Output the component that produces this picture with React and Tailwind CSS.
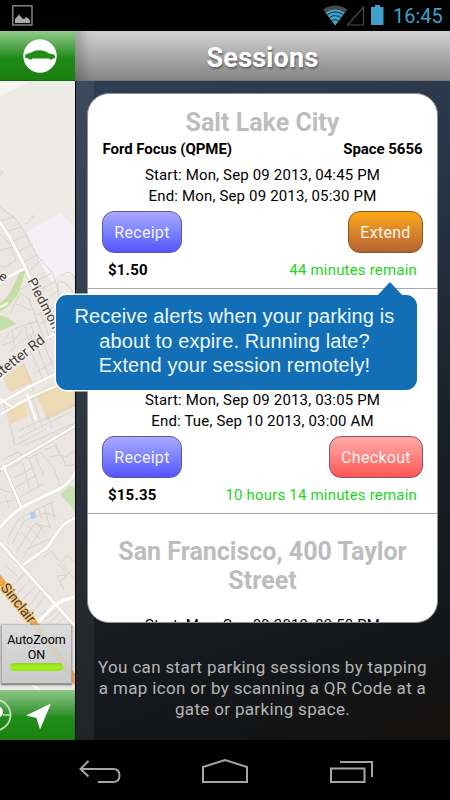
import React from "react";

function StatusBar() {
  return (
    <div className="flex h-[31px] shrink-0 items-start justify-between bg-black pl-3 pr-2">
      <svg className="mt-[5px]" width="21" height="21" viewBox="0 0 21 21">
        <rect x="0.8" y="0.8" width="19.2" height="19.2" fill="none" stroke="#8a8a8a" strokeWidth="1.4" />
        <path d="M3 18V14L7 9.5L10 13L12 14L14.5 12L18 15V18Z" fill="#a9a9a9" />
      </svg>
      <div className="flex h-full items-start">
        <svg width="64" height="31" viewBox="0 0 64 31">
          <path d="M0 9.5Q12 1.5 24.5 9.5L12.2 25.5Z" fill="#4a4a4a" />
          <path d="M2.6 12.7Q12 6.5 21.8 12.7L12.2 25.5Z" fill="#3fa0c8" />
          <g fill="none" stroke="#123344" strokeWidth="1">
            <path d="M4.2 14.6Q12.2 9.3 20.2 14.6" />
            <path d="M6.3 17.6Q12.2 13.6 18 17.6" />
            <path d="M8.6 20.8Q12.2 18.2 15.6 20.8" />
          </g>
          <path d="M24.5 25L40.5 7V25Z" fill="none" stroke="#4c4c4c" strokeWidth="1.2" />
          <path d="M48 7H52V5H57V7H60.5V25H48Z" fill="#3fa0c8" />
        </svg>
        <span className="ml-[6px] mt-[4px] w-[49px] whitespace-nowrap text-[20px] leading-6 text-[#3fa0c8]">16:45</span>
      </div>
    </div>
  );
}

function StreetMap() {
  return (
    <svg className="block" width="75" height="609" viewBox="0 81 75 609">
      <rect x="0" y="81" width="75" height="609" fill="#edebe5" />
      <path d="M0 81H32L0 96Z" fill="#f6f5f2" />
      <path d="M0 205L15 218L30 235L58 300L75 320V690H0Z" fill="#ebe6e1" />
      <path d="M27 232L60 213L75 228V275L60 274L52 282L40 262Z" fill="#f3f0f7" />
      <path d="M25 271L20 290Q12 305 0 312V303Q8 298 13 287L20 272Z" fill="#c5dfa3" />
      <path d="M0 315L8 318L16 324L0 331Z" fill="#c3dfa8" />
      <path d="M3 378L23 363L33 382L10 392Z" fill="#ecdab5" />
      <path d="M7 408L25 402L28 416L11 424Z" fill="#ecdab5" />
      <path d="M35 393L55 384L75 388V406L47 420Z" fill="#ecdab5" />
      <path d="M60 494L70 486L75 488V512L70 505Z" fill="#c9dfb4" />
      <path d="M30 513L35 511L36 518L31 519Z" fill="#a9cdf0" />
      <g fill="none" stroke="#cfcac4" strokeWidth="0.7">
        <path d="M0 207L15 218L22 228L38 257L53 273L59 295L75 320M2 221L15 216M7 231L22 227M12 242L27 235M17 252L33 244M22 263L37 255M29 220Q35 212 33 218Q30 223 24 224M0 176Q4 171 0 170" />
        <path d="M0 234L8 241L16 260L5 267L0 266M0 250L14 247M26 275L42 259M31 284L52 273M36 292L54 282M47 300L57 291M58 282L58 300M63 275Q70 268 75 278M60 281Q68 283 74 294" />
        <path d="M10 314L20 293L29 299L38 324M16 304L31 310M21 289L32 283M4 340L12 330L24 325L38 321M3 345L14 341L22 330M14 345L12 330M9 352L20 342L35 332M25 326L31 350M30 322L40 354M36 318L46 344M41 314L50 340" />
        <path d="M45 302L58 328M36 315L54 307M40 324L56 317M0 374L18 356L28 348M23 362L34 391M30 350L44 382M36 346L49 376M43 343L55 370M33 374L55 361M36 383L55 372M30 400L75 378M15 446L9 420L3 402M17 445L46 429M23 446L75 423M19 438L72 411M18 431L75 405M26 402L36 430M32 397L43 428M46 412L52 428" />
        <path d="M4 459L18 452L29 459L39 486M10 468L23 461M14 478L32 468M16 487L37 475M20 497L43 484M23 463L30 490M30 458L40 452L54 468L60 486M36 458L44 476M44 450L55 446L62 456L66 466L75 464M49 457L60 455M56 443L58 453Q63 462 72 452L75 453M0 489L12 493M5 495L9 508M0 503L13 500" />
        <path d="M8 538L18 520L31 512L55 501M12 544L24 521L44 513L57 516M17 551L34 524L51 527M23 558L43 526M27 549L50 539M32 544L21 532M40 539L28 526M45 534L35 520M44 505L50 528M51 502L55 520M38 508L42 519" />
        <path d="M43 557L51 551L74 579M56 563L62 568L67 575L57 576L64 590M62 562L67 555L75 562M60 582L72 570M5 565L17 576M13 586L26 571M17 594L32 578M22 600L36 586M29 606L40 591M33 612L45 596M41 614L53 608M44 620L57 610M48 624L60 613M54 626L66 617M0 635L5 650L0 659M3 594L8 588" />
      </g>
      <g fill="none" stroke="#d6d1ca" strokeWidth="4.2">
        <path d="M0 222L10 238L25 267L34 289" />
        <path d="M0 470L75 426M3 465L22 509" />
        <path d="M0 528Q12 512 30 503L61 488Q74 480 77 468" />
        <path d="M0 543L76 627M75 518Q63 523 57 533Q51 541 48 547L23 565" />
      </g>
      <g fill="none" stroke="#fffefb">
        <path strokeWidth="3" d="M0 222L10 238L25 267L34 289L37 296" />
        <path strokeWidth="2" d="M0 283L8 277L25 268M0 307L8 303M0 380L17 357L56 333M0 403L29 387L55 374M1 414L31 397L75 378M0 399L12 407M27 394L36 420" />
        <path strokeWidth="2.6" d="M0 470L75 426M3 465L22 509" />
        <path strokeWidth="3.2" d="M0 528Q12 512 30 503L61 488Q74 480 77 468" />
        <path strokeWidth="3" d="M0 543L76 627M75 518Q63 523 57 533Q51 541 48 547L23 565M75 597Q63 600 55 605L37 623M30 682L40 691" />
      </g>
      <path d="M-3 576L34 623L78 684" fill="none" stroke="#d9902f" strokeWidth="6.4" />
      <path d="M-3 576L34 623L78 684" fill="none" stroke="#f3a845" strokeWidth="5" />
      <g fontFamily="Roboto, sans-serif" fill="#3f3c3a" stroke="#f3efea" strokeWidth="2.2" paintOrder="stroke" strokeLinejoin="round">
        <text transform="translate(27 281) rotate(62)" fontSize="13.5" letterSpacing="0.3">Piedmont</text>
        <text transform="translate(-2 379) rotate(-38)" fontSize="14" letterSpacing="0">stetter Rd</text>
        <text transform="translate(-2 278) rotate(35)" fontSize="13">e</text>
        <text transform="translate(-5 475) rotate(-32)" fontSize="13">d</text>
        <text transform="translate(0 588) rotate(51)" fontSize="14.2" stroke="#f7c77c">Sinclair</text>
      </g>
    </svg>
  );
}

function MapPane() {
  return (
    <div className="relative flex w-[75px] shrink-0 flex-col overflow-hidden">
      <div className="flex h-[50px] items-center border-b border-[#126b0c] bg-linear-to-b from-[#8ecb89] via-[#1d8c15] via-55% to-[#1b7f10] pl-[23px]">
        <svg width="34" height="34" viewBox="0 0 34 34">
          <circle cx="17" cy="17" r="16.7" fill="#fff" />
          <path d="M2 18Q1.8 15.2 5 14.4Q8 13.8 10 12.4Q14 11 19 11.4Q23 12 26 14.6Q31 15 32 17V19L30 19.6Q28.5 21.8 26 19.6H9.5Q7.5 21.8 5.3 19.4L2.4 18.8Z" fill="#218c18" />
        </svg>
      </div>
      <div className="h-[609px]">
        <StreetMap />
      </div>
      <button className="absolute left-px top-[594px] flex h-[60px] w-[71px] flex-col items-center border border-b-2 border-[#aaa] border-t-[#d8d8d8] border-b-[#929292] bg-linear-to-b from-[#dadadae8] to-[#c8c8cbe8] pt-[6px] text-[12.5px] leading-[15px] text-black shadow-[0_0_2px_#777]">
        <span>AutoZoom</span>
        <span>ON</span>
        <span className="mt-px h-[8px] w-[53px] rounded-[4px] bg-linear-to-b from-[#8fd21d] via-[#a8ef22] to-[#8fe70b]" />
      </button>
      <div className="h-[50px] bg-linear-to-b from-[#8dc88a] via-[#218d19] via-55% to-[#1b8210]">
        <svg width="75" height="50" viewBox="0 0 75 50">
          <circle cx="-5" cy="25" r="15.5" fill="none" stroke="#bfe2bb" strokeWidth="1.8" />
          <path d="M3 25H10M-5 32V40" stroke="#bfe2bb" strokeWidth="1.5" />
          <circle cx="-3" cy="22" r="6" fill="#fff" />
          <path d="M51 13.5L26 25.5L36.5 28L40 39.5Z" fill="#fff" />
        </svg>
      </div>
    </div>
  );
}

function Session({ children, className }) {
  return <section className={"flex shrink-0 flex-col items-center border-b border-[#a8a8a8] px-[14px] " + className}>{children}</section>;
}

function ActionButton({ children, className }) {
  return (
    <button className={"h-[42px] rounded-[12px] border pt-[2px] text-[16px] leading-5 tracking-[0.3px] text-white/90 " + className}>
      {children}
    </button>
  );
}

function Totals({ price, remain }) {
  return (
    <div className="mt-[7px] flex w-full justify-between pl-[6px] pr-[6px] text-[15px] leading-5">
      <span className="font-bold tracking-[0.2px]">{price}</span>
      <span className="tracking-[0.19px] text-[#1dd61d]">{remain}</span>
    </div>
  );
}

function Dates({ start, end }) {
  return (
    <div className="text-center text-[15px] leading-[21px] tracking-[0.16px]">
      <div>{start}</div>
      <div>{end}</div>
    </div>
  );
}

const receiptColors = "w-[80px] border-[#5c589f] bg-linear-to-b from-[#aaa9ff] to-[#5653ff]";

function SessionsPane() {
  return (
    <div className="flex min-w-0 grow flex-col">
      <header className="flex h-[50px] shrink-0 items-center justify-center border-b border-[#777] bg-linear-to-b from-[#d3d3d3] to-[#858585] shadow-[inset_20px_0_12px_-12px_#0003]">
        <h1 className="mt-[4px] text-[27px] font-bold leading-8 tracking-[0.2px] text-white [text-shadow:1px_2px_2px_#666]">Sessions</h1>
      </header>
      <div className="flex grow bg-[linear-gradient(160deg,#303e53_0%,#293547_28%,#1b2129_58%,#14181c_80%,#14110f_100%)]">
        <div className="w-[19px] shrink-0 border-l border-black bg-white/6" />
        <div className="-ml-[7px] flex grow flex-col">
          <div className="mt-[12px] flex h-[530px] w-[351px] flex-col overflow-hidden rounded-[22px] border border-[#8e9299] bg-white text-black">
            <Session className="h-[195px]">
              <h2 className="mt-[14px] text-[25px] font-bold leading-[30px] text-[#bdbdbd]">Salt Lake City</h2>
              <div className="mt-[1px] flex w-full justify-between px-[0.5px] text-[15px] font-bold leading-5 tracking-[-0.05px]">
                <span>Ford Focus (QPME)</span>
                <span>Space 5656</span>
              </div>
              <div className="mt-[6px]">
                <Dates start="Start: Mon, Sep 09 2013, 04:45 PM" end="End: Mon, Sep 09 2013, 05:30 PM" />
              </div>
              <div className="mt-[4px] flex w-full justify-between">
                <ActionButton className={receiptColors}>Receipt</ActionButton>
                <ActionButton className="w-[75px] border-[#805827] bg-linear-to-b from-[#fea90d] to-[#b56332]">Extend</ActionButton>
              </div>
              <Totals price="$1.50" remain="44 minutes remain" />
            </Session>
            <Session className="h-[225px] justify-end pb-[8px]">
              <Dates start="Start: Mon, Sep 09 2013, 03:05 PM" end="End: Tue, Sep 10 2013, 03:00 AM" />
              <div className="mt-[4px] flex w-full justify-between">
                <ActionButton className={receiptColors}>Receipt</ActionButton>
                <ActionButton className="w-[94px] border-[#885366] bg-linear-to-b from-[#ffaaa9] to-[#ff5353]">Checkout</ActionButton>
              </div>
              <Totals price="$15.35" remain="10 hours 14 minutes remain" />
            </Session>
            <Session className="h-[225px]">
              <h2 className="mt-[23px] text-center text-[25px] font-bold leading-[29px] text-[#bdbdbd]">San Francisco, 400 Taylor<br />Street</h2>
              <div className="mt-[20px]">
                <Dates start="Start: Mon, Sep 09 2013, 03:58 PM" end="End: Mon, Sep 09 2013, 05:58 PM" />
              </div>
            </Session>
          </div>
          <p className="mt-[34px] w-[351px] whitespace-nowrap text-center text-[17px] leading-[21px] tracking-[0.34px] text-[#b5b5b5]">
            You can start parking sessions by tapping<br />a map icon or by scanning a QR Code at a<br />gate or parking space.
          </p>
        </div>
      </div>
    </div>
  );
}

function AlertCallout() {
  return (
    <div className="absolute left-[56px] top-[295px] h-[95px] w-[361px] rounded-[11px] bg-[#126fb5] pr-[4px] pt-[9px] text-center font-['Liberation_Sans',Arial,sans-serif] text-[20px] leading-[24.5px] tracking-[0.12px] text-[#ecf7ff] shadow-[0_0_0_1.5px_#fff]">
      <svg className="absolute left-[320px] top-[-14px]" width="28" height="16" viewBox="0 0 28 16">
        <path d="M0 16L14 1L28 16Z" fill="#126fb5" />
      </svg>
      <p className="whitespace-nowrap">Receive alerts when your parking is<br />about to expire. Running late?<br />Extend your session remotely!</p>
    </div>
  );
}

function NavigationBar() {
  return (
    <nav className="h-[60px] shrink-0 bg-black">
      <svg width="450" height="60" viewBox="0 0 450 60" fill="none" stroke="#a5a5a5" strokeWidth="2">
        <path d="M88.5 21L80.5 29L88.5 36.5M81 29H113Q119.5 29 119.5 35.5Q119.5 42 113 42H98" />
        <path d="M203 42V27L225 20L247 27V42Z" />
        <path d="M331 28.5H364.5V42H331ZM340 22H372V37" />
      </svg>
    </nav>
  );
}

export default function App() {
  return (
    <div className="relative flex h-[800px] w-[450px] flex-col overflow-hidden bg-black font-[Roboto,sans-serif]">
      <StatusBar />
      <main className="flex h-[709px] shrink-0">
        <MapPane />
        <SessionsPane />
      </main>
      <AlertCallout />
      <NavigationBar />
    </div>
  );
}
